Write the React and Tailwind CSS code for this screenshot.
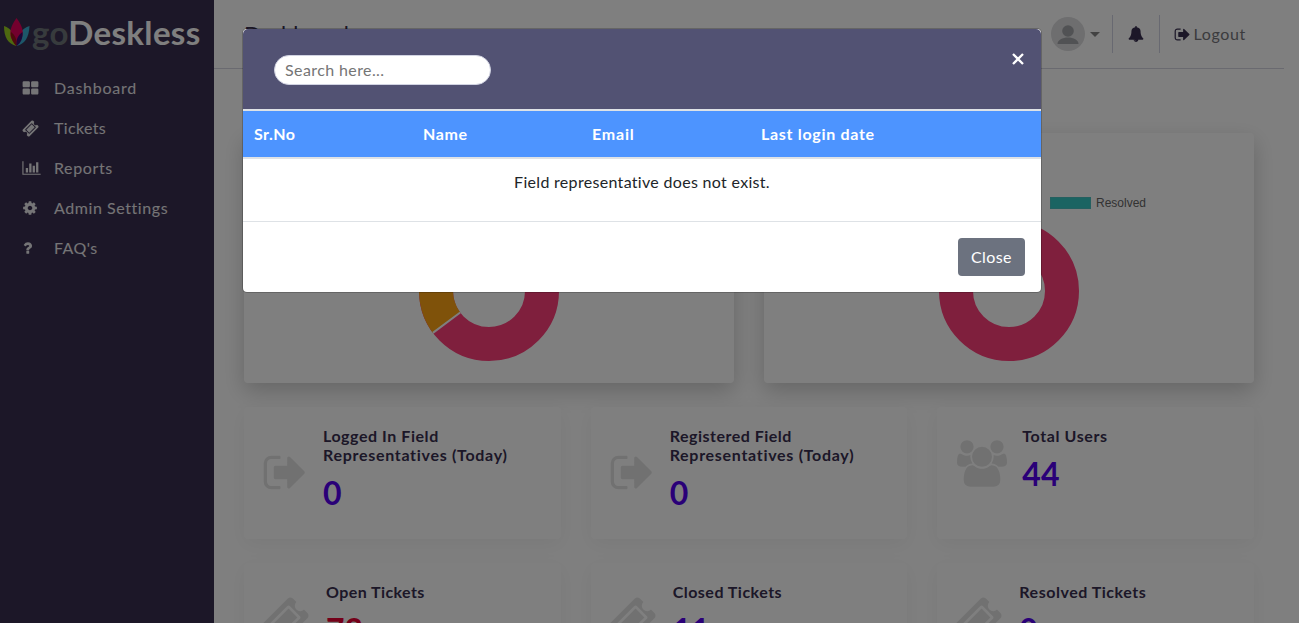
import React from "react";

const PATHS = {
  grid: "M832 1024v384q0 52-38 90t-90 38h-512q-52 0-90-38t-38-90v-384q0-52 38-90t90-38h512q52 0 90 38t38 90zm0-768v384q0 52-38 90t-90 38h-512q-52 0-90-38t-38-90v-384q0-52 38-90t90-38h512q52 0 90 38t38 90zm896 768v384q0 52-38 90t-90 38h-512q-52 0-90-38t-38-90v-384q0-52 38-90t90-38h512q52 0 90 38t38 90zm0-768v384q0 52-38 90t-90 38h-512q-52 0-90-38t-38-90v-384q0-52 38-90t90-38h512q52 0 90 38t38 90z",
  ticket: "M1024 452l316 316-572 572-316-316zm-211 979l618-618q19-19 19-45t-19-45l-362-362q-18-18-45-18t-45 18l-618 618q-19 19-19 45t19 45l362 362q18 18 45 18t45-18zm889-637l-907 908q-37 37-90.5 37t-90.5-37l-126-126q56-56 56-136t-56-136-136-56-136 56l-125-126q-37-37-37-90.5t37-90.5l907-906q37-37 90.5-37t90.5 37l125 125q-56 56-56 136t56 136 136 56 136-56l126 125q37 37 37 90.5t-37 90.5z",
  chart: "M640 896v512h-256v-512h256zm384-512v1024h-256v-1024h256zm1024 1152v128h-2048v-1536h128v1408h1920zm-640-896v768h-256v-768h256zm384-384v1152h-256v-1152h256z",
  cog: "M1152 896q0-106-75-181t-181-75-181 75-75 181 75 181 181 75 181-75 75-181zm512-109v222q0 12-8 23t-20 13l-185 28q-19 54-39 91 35 50 107 138 10 12 10 25t-9 23q-27 37-99 108t-94 71q-12 0-26-9l-138-108q-44 23-91 38-16 136-29 186-7 28-36 28h-222q-14 0-24.5-8.5t-11.5-21.5l-28-184q-49-16-90-37l-141 107q-10 9-25 9-14 0-25-11-126-114-165-168-7-10-7-23 0-12 8-23 15-21 51-66.5t54-70.5q-27-50-41-99l-183-27q-13-2-21-12.5t-8-23.5v-222q0-12 8-23t19-13l186-28q14-46 39-92-40-57-107-138-10-12-10-24 0-10 9-23 26-36 98.5-107.5t94.5-71.5q13 0 26 10l138 107q44-23 91-38 16-136 29-186 7-28 36-28h222q14 0 24.5 8.5t11.5 21.5l28 184q49 16 90 37l142-107q9-9 24-9 13 0 25 10 129 119 165 170 7 8 7 22 0 12-8 23-15 21-51 66.5t-54 70.5q26 50 41 98l183 28q13 2 21 12.5t8 23.5z",
  question: "M1088 1256v240q0 16-12 28t-28 12h-240q-16 0-28-12t-12-28v-240q0-16 12-28t28-12h240q16 0 28 12t12 28zm316-600q0 54-15.5 101t-35 76.5-55 59.5-57.5 43.5-61 35.5q-41 23-68.5 65t-27.5 67q0 17-12 32.5t-28 15.5h-240q-15 0-25.5-18.5t-10.5-37.5v-45q0-83 65-156.5t143-108.5q59-27 84-56t25-76q0-42-46.5-74t-107.5-32q-65 0-108 29-35 25-107 115-13 16-31 16-12 0-25-8l-164-125q-13-10-15.5-25t5.5-28q160-266 464-266 80 0 161 31t146 83 106 127.5 41 158.5z",
  bell: "M912 1696q0-16-16-16-59 0-101.5-42.5t-42.5-101.5q0-16-16-16t-16 16q0 73 51.5 124.5t124.5 51.5q16 0 16-16zm816-288q0 52-38 90t-90 38h-448q0 106-75 181t-181 75-181-75-75-181h-448q-52 0-90-38t-38-90q50-42 91-88t85-119.5 74.5-158.5 50-206 19.5-260q0-152 117-282.5t307-158.5q-8-19-8-39 0-40 28-68t68-28 68 28 28 68q0 20-8 39 190 28 307 158.5t117 282.5q0 139 19.5 260t50 206 74.5 158.5 85 119.5 91 88z",
  signOut: "M704 1440q0 4 1 20t.5 26.5-3 23.5-10 19.5-20.5 6.5h-320q-119 0-203.5-84.5t-84.5-203.5v-704q0-119 84.5-203.5t203.5-84.5h320q13 0 22.5 9.5t9.5 22.5q0 4 1 20t.5 26.5-3 23.5-10 19.5-20.5 6.5h-320q-66 0-113 47t-47 113v704q0 66 47 113t113 47h312l11.5 1 11.5 3 8 5.5 7 9 2 13.5zm928-544q0 26-19 45l-544 544q-19 19-45 19t-45-19-19-45v-288h-448q-26 0-45-19t-19-45v-384q0-26 19-45t45-19h448v-288q0-26 19-45t45-19 45 19l544 544q19 19 19 45z",
  users: "M529 896q-162 5-265 128h-134q-82 0-138-40.5t-56-118.5q0-353 124-353 6 0 43.5 21t97.5 42.5 119 21.5q67 0 133-23-5 37-5 66 0 139 81 256zm1071 637q0 120-73 189.5t-194 69.5h-874q-121 0-194-69.5t-73-189.5q0-53 3.5-103.5t14-109 26.5-108.5 43-97.5 62-81 85.5-53.5 111.5-20q10 0 43 21.5t73 48 107 48 135 21.5 135-21.5 107-48 73-48 43-21.5q61 0 111.5 20t85.5 53.5 62 81 43 97.5 26.5 108.5 14 109 3.5 103.5zm-1024-1277q0 106-75 181t-181 75-181-75-75-181 75-181 181-75 181 75 75 181zm704 384q0 159-112.5 271.5t-271.5 112.5-271.5-112.5-112.5-271.5 112.5-271.5 271.5-112.5 271.5 112.5 112.5 271.5zm576 225q0 78-56 118.5t-138 40.5h-134q-103-123-265-128 81-117 81-256 0-29-5-66 66 23 133 23 59 0 119-21.5t97.5-42.5 43.5-21q124 0 124 353zm-128-609q0 106-75 181t-181 75-181-75-75-181 75-181 181-75 181 75 75 181z",
};

function Icon({ name, viewBox = "0 0 1792 1792", className }) {
  return (
    <svg viewBox={viewBox} className={className} fill="currentColor" aria-hidden="true">
      <path d={PATHS[name]} />
    </svg>
  );
}

const NAV = [
  { label: "Dashboard", icon: "grid", size: "size-[17px]", track: "tracking-[0.76px]" },
  { label: "Tickets", icon: "ticket", size: "size-[17px]", track: "tracking-[0.36px]" },
  { label: "Reports", icon: "chart", box: "0 0 2048 1792", size: "h-4 w-[19px]", track: "tracking-[0.62px]" },
  { label: "Admin Settings", icon: "cog", size: "size-4", track: "tracking-[0.57px]" },
  { label: "FAQ's", icon: "question", box: "280 0 1792 1792", size: "size-4", track: "tracking-[0.4px]" },
];

function Logo() {
  return (
    <div className="flex h-[68px] items-start pl-1 pt-[18px]">
      <svg viewBox="0 0 26 28" className="h-7 w-[26px] shrink-0" aria-hidden="true">
        <path d="M0 8C7 10 12 17 12.500 28 4 26 0 19 0 8Z" fill="#9bd021" />
        <path d="M25.500 8C18 10 13 17 12.500 28 21 26 25 19 25.500 8Z" fill="#3aaed2" />
        <path d="M12.500 0C18 7 21 15 17 21 15 24 13 26 12.500 28 11 25 8 23 6.500 18 5.500 11 9 5 12.500 0Z" fill="#e6005c" />
        <path d="M7 14C11 17 13 21 12.500 28 9 25 6.500 20 7 14Z" fill="#9c1418" />
        <path d="M18.500 14C14 17 12 21 12.500 28 17 25 19 20 18.500 14Z" fill="#37106e" />
      </svg>
      <span className="-mt-1 ml-[2px] whitespace-nowrap text-[33px] font-bold leading-9 tracking-[0.35px] text-white">
        <span className="text-[#6f777b]">go</span>
        <span>Deskless</span>
      </span>
    </div>
  );
}

function Sidebar() {
  return (
    <aside className="w-[214px] shrink-0 bg-[#392f50]">
      <Logo />
      <nav>
        {NAV.map((n) => (
          <div key={n.label} className="flex h-10 items-center pl-[22px] text-white/90">
            <span className="flex w-8 items-center">
              <Icon name={n.icon} viewBox={n.box} className={n.size} />
            </span>
            <span className={n.track}>{n.label}</span>
          </div>
        ))}
      </nav>
    </aside>
  );
}

function Header() {
  return (
    <header className="mr-[15px] flex h-[69px] shrink-0 items-center border-b border-[#d5d5e0] pl-[30px] pr-[38px] text-[#392f50]">
      <h1 className="flex-1 text-[22px] leading-6">Dashboard</h1>
      <div className="flex h-[38px] items-center">
        <svg viewBox="0 0 34 34" className="size-[34px]" aria-hidden="true">
          <circle cx="17" cy="17" r="17" fill="#dcdcde" />
          <circle cx="17" cy="14" r="5.800" fill="#a2a4a8" />
          <path d="M6.500 27c0-4 5-6.500 10.500-6.500s10.500 2.500 10.500 6.500Z" fill="#a2a4a8" />
        </svg>
        <span className="ml-[5px] border-x-[5px] border-t-[5px] border-x-transparent border-t-[#858585]" />
        <span className="ml-3 h-[38px] w-px bg-[#d1d3e2]" />
        <Icon name="bell" className="mx-[15px] size-4" />
        <span className="h-[38px] w-px bg-[#d1d3e2]" />
        <Icon name="signOut" className="ml-[14px] mr-[3px] size-[17px]" />
        <span className="tracking-[0.65px] text-[#77777d]">Logout</span>
      </div>
    </header>
  );
}

function Donut({ split }) {
  return (
    <svg viewBox="0 0 140 140" className="size-[140px]" aria-hidden="true">
      <circle cx="70" cy="70" r="53" fill="none" stroke="#ff3e7a" strokeWidth="34" />
      {split && (
        <g>
          <path d="M13.900 111.900A70 70 0 0 1 20.500 20.500L44.500 44.500A36 36 0 0 0 41.200 91.500Z" fill="#ffa415" />
          <path d="M13.900 111.900L41.200 91.500M20.500 20.500L44.500 44.500" stroke="#fff" strokeWidth="2" />
        </g>
      )}
    </svg>
  );
}

function ChartCard({ split, legend }) {
  return (
    <section className="flex h-[250px] flex-1 flex-col items-center rounded bg-white pt-16 shadow-[0_8px_22px_rgba(0,0,0,0.2)]">
      <div className="flex h-3 items-center self-stretch pl-[286px]">
        <span className="h-3 w-[41px] border border-[#4bc0c0] bg-[#36c8c4]" />
        <span className="ml-[5px] font-['Liberation_Sans'] text-xs leading-3 text-[#666]">{legend}</span>
      </div>
      <div className="mt-3">
        <Donut split={split} />
      </div>
    </section>
  );
}

const SIGN_OUT = "mt-[42px] ml-[18px] size-[47px]";
const TICKET = "mt-[33px] ml-[16px] size-[50px]";

const STATS = [
  { lines: [["Logged In Field", "tracking-[0.55px]"], ["Representatives (Today)", "tracking-[0.7px]"]], value: "0", icon: "signOut", size: SIGN_OUT, gap: "ml-[14px]" },
  { lines: [["Registered Field", "tracking-[0.5px]"], ["Representatives (Today)", "tracking-[0.7px]"]], value: "0", icon: "signOut", size: SIGN_OUT, gap: "ml-[14px]" },
  { lines: [["Total Users", "tracking-[0.6px]"]], value: "44", icon: "users", box: "-64 0 1920 1792", size: "mt-[33px] ml-[20px] h-[47px] w-[50px]", gap: "ml-[15px]" },
  { lines: [["Open Tickets", "tracking-[0.42px]"]], value: "73", red: true, icon: "ticket", size: TICKET, gap: "ml-[16px]" },
  { lines: [["Closed Tickets", "tracking-[0.48px]"]], value: "11", icon: "ticket", size: TICKET, gap: "ml-[16px]" },
  { lines: [["Resolved Tickets", "tracking-[0.52px]"]], value: "0", icon: "ticket", size: TICKET, gap: "ml-[16px]" },
];

function StatCard({ s }) {
  return (
    <section className="flex h-[132px] rounded bg-white shadow-[0_5px_20px_rgba(0,0,0,0.05)]">
      <Icon name={s.icon} viewBox={s.box} className={`${s.size} shrink-0 text-[#e3e3e3]`} />
      <div className={`${s.gap} w-[200px] pt-[19px]`}>
        <h2 className="text-base font-bold leading-[19px] text-[#392f50]">
          {s.lines.map(([text, track]) => (
            <span key={text} className={`block whitespace-nowrap ${track}`}>{text}</span>
          ))}
        </h2>
        <p className={`mt-[10px] text-[32px] font-bold leading-[38px] ${s.red ? "text-[#e80032]" : "text-[#5400f0]"}`}>{s.value}</p>
      </div>
    </section>
  );
}

function Modal() {
  return (
    <div className="absolute inset-0 flex items-start justify-center bg-black/50 pr-[15px] pt-7">
      <div role="dialog" className="w-[800px] overflow-hidden rounded-[5px] border border-black/20 bg-white bg-clip-padding">
        <div className="flex h-20 items-start justify-between rounded-t-[5px] bg-[#525273] pl-[31px] pr-[17px] pt-[26px]">
          <div className="flex h-[30px] w-[217px] items-center rounded-full border border-[#d1d3e2] bg-white pl-[10px] text-[#757575]">
            <span className="tracking-[0.4px]">Search here...</span>
          </div>
          <svg viewBox="0 0 12 12" className="-mt-[2px] size-3" aria-hidden="true">
            <path d="M1 1l10 10m0-10l-10 10" stroke="#fff" strokeWidth="2.300" />
          </svg>
        </div>
        <div className="grid h-[50px] grid-cols-[169px_169px_169px_1fr] items-center border-y-2 border-[#dee2e6] bg-[#4d94ff] pl-[11px] font-bold text-white">
          <span className="tracking-[0.5px]">Sr.No</span>
          <span className="tracking-[0.6px]">Name</span>
          <span className="tracking-[0.8px]">Email</span>
          <span className="tracking-[0.7px]">Last login date</span>
        </div>
        <div className="flex h-[62px] justify-center pt-[11px] text-[#212529]">
          <span className="tracking-[0.31px]">Field representative does not exist.</span>
        </div>
        <div className="flex h-[71px] justify-end border-t border-[#dee2e6] pr-4 pt-4">
          <button className="h-[38px] w-[67px] rounded bg-[#6c727f] tracking-[0.4px] text-white">Close</button>
        </div>
      </div>
    </div>
  );
}

export default function App() {
  return (
    <div className="relative flex h-[623px] w-[1299px] overflow-hidden bg-white font-[Lato,sans-serif] text-base">
      <Sidebar />
      <div className="flex flex-1 flex-col">
        <Header />
        <main className="ml-[30px] mt-16 flex w-[1010px] flex-col gap-6">
          <div className="flex gap-[30px]">
            <ChartCard split legend="Closed" />
            <ChartCard legend="Resolved" />
          </div>
          <div className="grid grid-cols-3 gap-x-[30px] gap-y-6">
            {STATS.map((s) => (
              <StatCard key={s.lines[0][0]} s={s} />
            ))}
          </div>
        </main>
      </div>
      <Modal />
    </div>
  );
}
